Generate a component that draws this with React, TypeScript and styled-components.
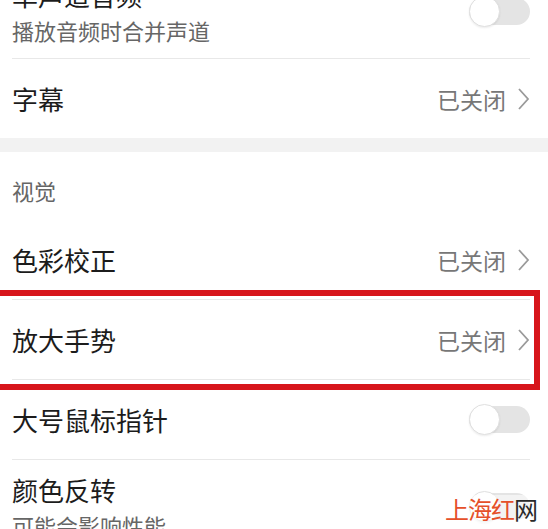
import React from 'react';
import styled, { createGlobalStyle } from 'styled-components';

const GlobalStyle = createGlobalStyle`
  html, body {
    margin: 0;
    padding: 0;
    background: #ffffff;
    overflow: hidden;
  }
  body {
    font-family: "Noto Sans CJK SC", "Noto Sans", sans-serif;
  }
`;

const Chevron = () => (
  <svg width="13" height="24" viewBox="0 0 13 24">
    <polyline points="2,2 11,12 2,22" fill="none" stroke="#9a9a9a" strokeWidth="1.8" />
  </svg>
);

const App = () => {
  return (
    <Page>
      <GlobalStyle />
      <List>
        <Row tall>
          <TextCol>
            <Title>单声道音频</Title>
            <Sub>播放音频时合并声道</Sub>
          </TextCol>
          <Toggle />
        </Row>
        <Row noLine>
          <Title>字幕</Title>
          <Value>
            已关闭
            <Chevron />
          </Value>
        </Row>
      </List>
      <SectionGap />
      <List>
        <Header>视觉</Header>
        <Row>
          <Title>色彩校正</Title>
          <Value>
            已关闭
            <Chevron />
          </Value>
        </Row>
        <Marked>
          <Row>
            <Title>放大手势</Title>
            <Value>
              已关闭
              <Chevron />
            </Value>
          </Row>
          <RedBox />
        </Marked>
        <Row>
          <Title>大号鼠标指针</Title>
          <Toggle />
        </Row>
        <Row tall>
          <TextCol>
            <Title>颜色反转</Title>
            <Sub>可能会影响性能</Sub>
          </TextCol>
          <Toggle />
        </Row>
      </List>
      <Watermark>
        <span>上海红</span>网
      </Watermark>
    </Page>
  );
};

const Page = styled.div`
  width: 548px;
  height: 529px;
  position: relative;
  overflow: hidden;
  background: #ffffff;
`;

const List = styled.div`
  display: flex;
  flex-direction: column;

  &:first-child {
    margin-top: -35px;
  }
`;

const Row = styled.div<{ tall?: boolean; noLine?: boolean }>`
  height: ${(p) => (p.tall ? 93 : 79)}px;
  margin: 0 18px 0 12px;
  display: flex;
  align-items: center;
  justify-content: space-between;
  border-bottom: ${(p) => (p.noLine ? 'none' : '1px solid #e8e8e8')};
  box-sizing: content-box;
`;

const TextCol = styled.div`
  display: flex;
  flex-direction: column;
  gap: 4px;
`;

const Title = styled.div`
  font-size: 26px;
  line-height: 32px;
  color: #1c1c1c;
`;

const Sub = styled.div`
  font-size: 22px;
  line-height: 30px;
  color: #666666;
`;

const Value = styled.div`
  display: flex;
  align-items: center;
  gap: 11px;
  font-size: 23px;
  color: #777777;
`;

const Toggle = styled.div`
  width: 61px;
  height: 27px;
  border-radius: 14px;
  background: #e4e4e4;
  position: relative;

  &::before {
    content: '';
    position: absolute;
    left: 0;
    top: -2px;
    width: 29px;
    height: 29px;
    border-radius: 50%;
    background: #ffffff;
    border: 1px solid #e0e0e0;
    box-shadow: 0 1px 2px rgba(0, 0, 0, 0.08);
  }
`;

const SectionGap = styled.div`
  height: 14px;
  background: #f2f2f2;
`;

const Header = styled.div`
  height: 68px;
  padding: 0 12px;
  display: flex;
  align-items: center;
  padding-top: 8px;
  box-sizing: border-box;
  font-size: 22px;
  color: #666666;
`;

const Marked = styled.div`
  position: relative;
`;

const RedBox = styled.div`
  position: absolute;
  top: -10px;
  bottom: -10px;
  left: -8px;
  right: 8px;
  border: 6px solid #d7151b;
  pointer-events: none;
`;

const Watermark = styled.div`
  position: absolute;
  right: 11px;
  bottom: 6px;
  font-size: 24px;
  line-height: 28px;
  letter-spacing: -1px;
  color: #2a2a2a;
  background: rgba(255, 255, 255, 0.55);

  span {
    color: #e5502a;
  }
`;

export default App;
